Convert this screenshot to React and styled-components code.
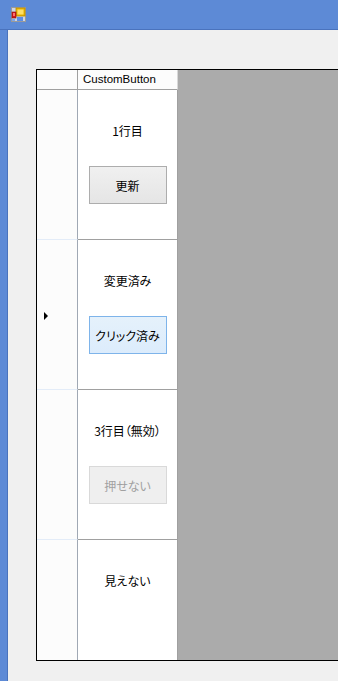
import React from 'react';
import styled, { createGlobalStyle } from 'styled-components';

const GlobalStyle = createGlobalStyle`
  html, body {
    margin: 0;
    padding: 0;
    background: #5d8ad6;
    overflow: hidden;
  }
  * {
    box-sizing: border-box;
  }
`;

const rows = [
  { label: '1行目', button: '更新', kind: 'normal' },
  { label: '変更済み', button: 'クリック済み', kind: 'clicked', current: true },
  { label: '3行目（無効）', button: '押せない', kind: 'disabled' },
  { label: '見えない', button: null, last: true },
];

function App() {
  return (
    <Window>
      <GlobalStyle />
      <TitleBar>
        <AppIcon />
      </TitleBar>
      <Client>
        <Grid>
          <HeaderRow>
            <CornerCell />
            <ColumnHeader>CustomButton</ColumnHeader>
            <Empty />
          </HeaderRow>
          {rows.map((row) => (
            <Row key={row.label} last={row.last}>
              <RowHeader last={row.last}>{row.current && <Arrow />}</RowHeader>
              <Cell last={row.last}>
                <Label>{row.label}</Label>
                {row.button && (
                  <CellButton kind={row.kind} disabled={row.kind === 'disabled'}>
                    {row.button}
                  </CellButton>
                )}
              </Cell>
              <Empty />
            </Row>
          ))}
        </Grid>
      </Client>
    </Window>
  );
}

function AppIcon() {
  return (
    <svg width="15" height="15" viewBox="0 0 15 15">
      <rect x="0.5" y="0.5" width="14" height="14" fill="#cfd6e2" stroke="#9a9a9a" />
      <rect x="5" y="1" width="9" height="8" fill="#e8b400" stroke="#b88a00" strokeWidth="0.8" />
      <rect x="6.5" y="2.5" width="6" height="5" fill="#ffe066" />
      <rect x="1" y="5" width="4" height="6" fill="#d21a1a" stroke="#8a1010" strokeWidth="0.6" />
      <rect x="2" y="6" width="2" height="3" fill="#ff7070" />
      <rect x="6" y="10" width="6" height="4" fill="#5c8ee6" />
      <rect x="1" y="12" width="3" height="2" fill="#7ea6e8" />
    </svg>
  );
}

export default App;

const Window = styled.div`
  width: 338px;
  height: 681px;
  display: flex;
  flex-direction: column;
  background: #5d8ad6;
`;

const TitleBar = styled.div`
  height: 30px;
  display: flex;
  align-items: center;
  padding: 0 0 0 11px;
  border-bottom: 1px solid #4a73bd;
`;

const Client = styled.div`
  flex: 1;
  margin-left: 7px;
  border-left: 1px solid #4a73bd;
  background: #f0f0f0;
  padding: 39px 0 0 28px;
  overflow: hidden;
`;

const Grid = styled.div`
  width: 320px;
  height: 592px;
  border: 1px solid #000;
  background: #ababab;
  display: flex;
  flex-direction: column;
  font-family: 'Noto Sans CJK JP', 'Liberation Sans', sans-serif;
  font-size: 12px;
  font-feature-settings: 'palt';
  color: #000;
`;

const HeaderRow = styled.div`
  display: flex;
  height: 20px;
`;

const CornerCell = styled.div`
  width: 41px;
  background: #fcfcfc;
  border-right: 1px solid #a0a0a0;
  border-bottom: 1px solid #a0a0a0;
`;

const ColumnHeader = styled.div`
  width: 100px;
  background: #fcfcfc;
  border-right: 1px solid #d8d8d8;
  border-bottom: 1px solid #a0a0a0;
  font-family: 'Liberation Sans', Arial, sans-serif;
  font-size: 11.5px;
  line-height: 19px;
  padding-left: 5px;
  white-space: nowrap;
`;

const Empty = styled.div`
  flex: 1;
`;

const Row = styled.div`
  display: flex;
  height: ${(p) => (p.last ? '120px' : '150px')};
`;

const RowHeader = styled.div`
  width: 41px;
  background: #fcfcfc;
  border-right: 1px solid #a0a8b4;
  border-bottom: ${(p) => (p.last ? 'none' : '1px solid #e3ecf8')};
  display: flex;
  align-items: center;
  padding-left: 7px;
`;

const Arrow = styled.span`
  width: 0;
  height: 0;
  border-top: 4px solid transparent;
  border-bottom: 4px solid transparent;
  border-left: 4px solid #000;
  margin-top: 3px;
`;

const Cell = styled.div`
  width: 100px;
  background: #fff;
  border-right: 1px solid #a0a0a0;
  border-bottom: ${(p) => (p.last ? 'none' : '1px solid #a0a0a0')};
  display: flex;
  flex-direction: column;
  align-items: center;
  padding-top: 34px;
`;

const Label = styled.div`
  line-height: 14px;
  height: 14px;
  white-space: nowrap;
`;

const CellButton = styled.button`
  margin-top: 28px;
  width: 78px;
  height: 38px;
  padding: 0;
  font-family: 'Noto Sans CJK JP', 'Liberation Sans', sans-serif;
  font-size: 12px;
  font-feature-settings: 'palt';
  white-space: nowrap;
  border: 1px solid
    ${(p) => (p.kind === 'clicked' ? '#7eb4ea' : p.kind === 'disabled' ? '#d9d9d9' : '#adadad')};
  background: ${(p) =>
    p.kind === 'clicked'
      ? 'linear-gradient(#e5f1fb, #dcecfc)'
      : p.kind === 'disabled'
        ? '#efefef'
        : 'linear-gradient(#f0f0f0, #e5e5e5)'};
  color: ${(p) => (p.kind === 'disabled' ? '#a0a0a0' : '#000')};
  border-radius: 0;
`;
